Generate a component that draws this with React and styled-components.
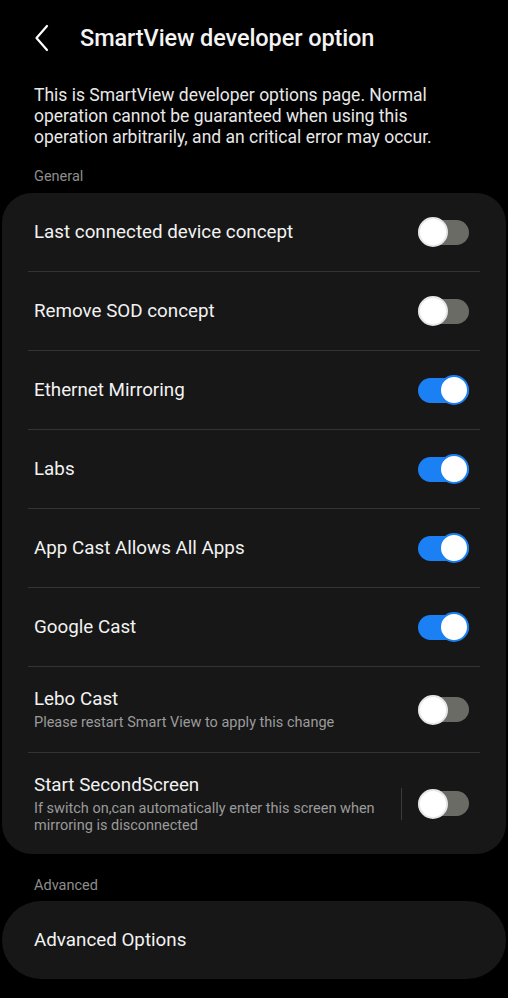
import React from "react";
import styled, { createGlobalStyle } from "styled-components";

const Global = createGlobalStyle`
  html, body { margin: 0; padding: 0; background: #000; }
  body { font-family: Roboto, "Noto Sans", sans-serif; color: #fff; -webkit-font-smoothing: antialiased; }
  * { box-sizing: border-box; }
`;

const Page = styled.div`
  width: 508px;
  min-height: 998px;
  background: #000;
  display: flex;
  flex-direction: column;
`;

const Header = styled.header`
  height: 75px;
  display: flex;
  align-items: center;
  padding-left: 34px;
  gap: 22px;
`;

const BackButton = styled.button`
  width: 24px;
  height: 30px;
  padding: 0;
  border: 0;
  background: none;
  display: flex;
  align-items: center;
  justify-content: flex-start;
  color: #fff;
`;

const Title = styled.h1`
  margin: 0;
  font-size: 23.5px;
  font-weight: 500;
  letter-spacing: -0.1px;
  color: #f4f4f4;
`;

const Intro = styled.p`
  margin: 10px 0 0;
  padding: 0 34px;
  font-size: 17.5px;
  line-height: 21px;
  color: #e8e8e8;
`;

const SectionLabel = styled.div`
  padding: 0 34px;
  margin-top: ${(p) => p.$top}px;
  font-size: 14.5px;
  line-height: 18px;
  color: #8d8d8d;
`;

const Card = styled.section`
  margin: ${(p) => p.$top}px 2px 0;
  background: #171717;
  border-radius: ${(p) => p.$radius}px;
  display: flex;
  flex-direction: column;
`;

const Row = styled.div`
  height: ${(p) => p.$h}px;
  display: flex;
  align-items: center;
  padding: 0 37px 0 32px;
  gap: 16px;
`;

const Texts = styled.div`
  flex: 1;
  display: flex;
  flex-direction: column;
  gap: 3px;
`;

const RowTitle = styled.div`
  font-size: 18.8px;
  line-height: 23px;
  color: #f2f2f2;
`;

const RowSub = styled.div`
  font-size: 14.5px;
  line-height: 17px;
  color: #9b9b9b;
`;

const Divider = styled.div`
  height: 1px;
  margin: 0 26px;
  background: #333;
`;

const VDivider = styled.div`
  width: 1px;
  height: 32px;
  background: #3a3a3a;
`;

const Switch = styled.div`
  position: relative;
  width: 51px;
  height: 30px;
  flex: none;
  display: flex;
  align-items: center;
`;

const Track = styled.div`
  width: 51px;
  height: 25px;
  border-radius: 13px;
  background: ${(p) => (p.$on ? "#1b80f4" : "#6b6b66")};
`;

const Thumb = styled.div`
  position: absolute;
  top: 0;
  left: ${(p) => (p.$on ? "21px" : "0")};
  width: 30px;
  height: 30px;
  border-radius: 50%;
  background: #fff;
  border: 2px solid ${(p) => (p.$on ? "#1b80f4" : "#e6e6e6")};
`;

const Toggle = ({ on }) => (
  <Switch>
    <Track $on={on} />
    <Thumb $on={on} />
  </Switch>
);

const items = [
  { t: "Last connected device concept", on: false },
  { t: "Remove SOD concept", on: false },
  { t: "Ethernet Mirroring", on: true },
  { t: "Labs", on: true },
  { t: "App Cast Allows All Apps", on: true },
  { t: "Google Cast", on: true },
];

export default function App() {
  return (
    <Page>
      <Global />
      <Header>
        <BackButton aria-label="Back">
          <svg width="16" height="28" viewBox="0 0 16 28" fill="none">
            <path d="M13 2 L2.5 14 L13 26" stroke="#fff" strokeWidth="2.2" strokeLinecap="round" strokeLinejoin="round" />
          </svg>
        </BackButton>
        <Title>SmartView developer option</Title>
      </Header>
      <Intro>
        This is SmartView developer options page. Normal operation cannot be guaranteed when using this operation arbitrarily, and an critical error may occur.
      </Intro>
      <SectionLabel $top={20}>General</SectionLabel>
      <Card $top={7} $radius={30}>
        {items.map((it) => (
          <React.Fragment key={it.t}>
            <Row $h={78}>
              <Texts>
                <RowTitle>{it.t}</RowTitle>
              </Texts>
              <Toggle on={it.on} />
            </Row>
            <Divider />
          </React.Fragment>
        ))}
        <Row $h={85}>
          <Texts>
            <RowTitle>Lebo Cast</RowTitle>
            <RowSub>Please restart Smart View to apply this change</RowSub>
          </Texts>
          <Toggle on={false} />
        </Row>
        <Divider />
        <Row $h={101}>
          <Texts>
            <RowTitle>Start SecondScreen</RowTitle>
            <RowSub>If switch on,can automatically enter this screen when mirroring is disconnected</RowSub>
          </Texts>
          <VDivider />
          <Toggle on={false} />
        </Row>
      </Card>
      <SectionLabel $top={23}>Advanced</SectionLabel>
      <Card $top={6} $radius={39}>
        <Row $h={78}>
          <Texts>
            <RowTitle>Advanced Options</RowTitle>
          </Texts>
        </Row>
      </Card>
    </Page>
  );
}
